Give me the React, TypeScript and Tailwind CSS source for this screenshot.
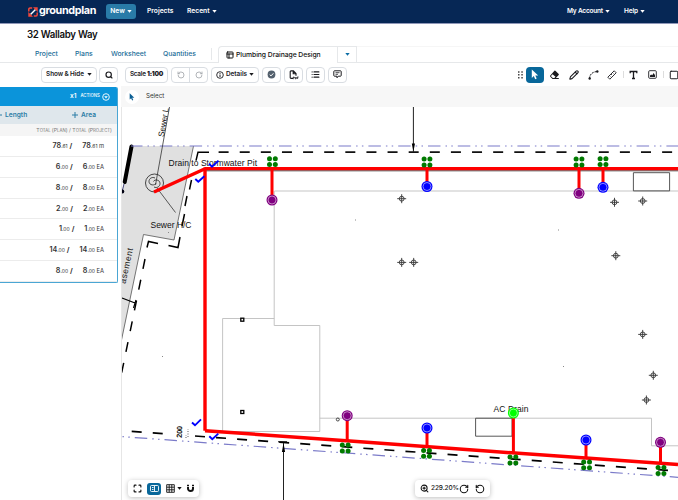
import React from "react";
import { List, Maximize, PanelsTopLeft, Pencil, RotateCcw, RotateCw, Search, Square, ZoomIn } from "lucide-react";

const rows = [
  { whole: "78", part: ".61", unit: "m" },
  { whole: "6", part: ".00", unit: "EA" },
  { whole: "8", part: ".00", unit: "EA" },
  { whole: "2", part: ".00", unit: "EA" },
  { whole: "1", part: ".00", unit: "EA" },
  { whole: "14", part: ".00", unit: "EA" },
  { whole: "8", part: ".00", unit: "EA" },
];

const clusters = [
  [272.4, 161.7],
  [427, 162],
  [579, 162],
  [603, 161.7],
  [345.2, 448],
  [426.5, 453.3],
  [512.9, 460],
  [586.6, 464.9],
  [661, 470.5],
];

const drops = [
  { x: 272, from: 169, to: 200, color: "#800080" },
  { x: 427, from: 169, to: 186.5, color: "#0000ff" },
  { x: 579, from: 169, to: 193.3, color: "#800080" },
  { x: 603, from: 169, to: 187.3, color: "#0000ff" },
  { x: 347.2, from: 441, to: 415.7, color: "#800080" },
  { x: 427, from: 446, to: 428, color: "#0000ff" },
  { x: 513.4, from: 453, to: 413, color: "#00ff00" },
  { x: 586, from: 458, to: 440, color: "#0000ff" },
  { x: 660.5, from: 463, to: 442.3, color: "#800080" },
];

const targets = [
  [401.7, 198.7],
  [401.7, 262.4],
  [413.7, 262.4],
  [614.5, 202.3],
  [642.7, 201],
  [615.8, 255.7],
  [642.7, 334.4],
  [653.3, 375.3],
  [646.4, 400],
];

const checks = ["M209 163.8l3 2.8 6.5-6", "M195.3 179l3 2.8 6-5.5", "M192 422.5l3 2.8 6-6", "M209.3 436.3l3 2.8 6-5.5"];

function Caret({ className = "" }: { className?: string }) {
  return (
    <svg className={`shrink-0 ${className}`} width="5" height="3" viewBox="0 0 5 3" fill="currentColor">
      <path d="M.3 0h4.4L2.5 2.8z" />
    </svg>
  );
}

function Button({ className = "", children }: { className?: string; children: React.ReactNode }) {
  return (
    <div className={`flex h-4 shrink-0 items-center justify-center rounded border border-[#d9dde2] bg-white text-[#1b1b1f] ${className}`}>{children}</div>
  );
}

function Header() {
  return (
    <div className="flex h-6 w-full shrink-0 items-center border-b border-[#8f97b8] bg-[#062755] text-[6.7px] font-semibold text-white">
      <svg className="ml-[27.5px] shrink-0" width="10" height="10" viewBox="0 0 10 10" fill="none">
        <path d="M4.2 1H2a1.2 1.2 0 0 0-1.2 1.200v2.300M5.800 9H8a1.200 1.200 0 0 0 1.200-1.200V5.500" stroke="#f4473a" strokeWidth="1.5" />
        <path d="M2.5 7.5l5-5" stroke="#fff" strokeWidth="1.5" />
        <path d="M5 .3h4.700V5zM.3 5v4.700H5z" fill="#f4473a" />
      </svg>
      <span className="ml-[1.5px] w-[68px] text-[10.8px] font-bold tracking-[-0.35px]">groundplan</span>
      <div className="-ml-px flex h-[15px] w-[30px] items-center justify-center gap-0.5 rounded-[3px] bg-[#297ba8]">
        New <Caret />
      </div>
      <span className="ml-[11px] w-[40px]">Projects</span>
      <span className="flex items-center gap-[2px]">
        Recent <Caret />
      </span>
      <span className="ml-auto mr-[14px] flex items-center gap-[2px] text-[6.5px] tracking-[-0.2px]">
        My Account <Caret />
      </span>
      <span className="mr-[33px] flex items-center gap-[2px] text-[6.5px] tracking-[-0.1px]">
        Help <Caret />
      </span>
    </div>
  );
}

function Tabs() {
  return (
    <div className="flex h-[18px] shrink-0 pt-px text-[6.8px] font-medium text-[#1a6c98]">
      <div className="flex w-[218px] shrink-0 items-center border-b border-[#e6e8ea] pl-[35px]">
        <span className="w-[40px]">Project</span>
        <span className="w-[36px]">Plans</span>
        <span className="w-[52px]">Worksheet</span>
        <span className="w-[48px]">Quantities</span>
        <span className="h-3 border-l border-[#e6e8ea]" />
      </div>
      <div className="flex w-[119px] shrink-0 items-center rounded-tl border-l border-t border-[#e6e8ea] pl-[7px] text-[#111]">
        <PanelsTopLeft className="mr-[2px] size-[8px]" strokeWidth={3} />
        <span className="whitespace-nowrap tracking-[-0.05px]">Plumbing Drainage Design</span>
      </div>
      <div className="flex w-[20px] shrink-0 items-center justify-center border border-[#e6e8ea] text-[#0b6da5]">
        <Caret />
      </div>
      <div className="grow border-y border-b-[#e6e8ea] border-t-[#f6f6f6]" />
    </div>
  );
}

function Toolbar() {
  return (
    <div className="flex h-[23px] shrink-0 items-center overflow-hidden pl-[41px] text-[6.4px] font-semibold">
      <Button className="w-[56px] gap-[3px]">
        <span className="tracking-[-0.1px]">Show &amp; Hide</span> <Caret />
      </Button>
      <Button className="ml-[2px] w-[19px]">
        <Search className="size-[8px]" strokeWidth={3.5} />
      </Button>
      <Button className="ml-[7px] w-[43px] whitespace-nowrap tracking-[-0.25px]">
        Scale&nbsp;<b>1:100</b>
      </Button>
      <Button className="ml-[3px] w-[37px] text-[#a2a6ab]">
        <span className="flex flex-1 justify-center">
          <RotateCcw className="size-[8px]" strokeWidth={2.5} />
        </span>
        <span className="h-full border-l border-[#d9dde2]" />
        <span className="flex flex-1 justify-center">
          <RotateCw className="size-[8px]" strokeWidth={2.5} />
        </span>
      </Button>
      <Button className="ml-[3px] w-[48px] gap-[2px]">
        <svg width="8" height="8" viewBox="0 0 8 8" fill="none" stroke="currentColor">
          <circle cx="4" cy="4" r="3.3" strokeWidth=".9" />
          <path d="M4 3.5V6M4 2v.9" strokeWidth="1" />
        </svg>
        Details <Caret />
      </Button>
      <Button className="ml-[3px] w-[19px]">
        <svg width="9" height="9" viewBox="0 0 9 9">
          <circle cx="4.5" cy="4.5" r="3.9" fill="#53606d" />
          <path d="M2.7 4.6l1.3 1.3 2.4-2.6" fill="none" stroke="#fff" strokeWidth="1" />
        </svg>
      </Button>
      <Button className="ml-[3px] w-[19px]">
        <svg width="10" height="10" viewBox="0 0 10 10" fill="none" stroke="currentColor" strokeWidth="1.1">
          <path d="M4 8.4H2a.8.8 0 0 1-.8-.8V1.7A.8.8 0 0 1 2 .9h2.4L7 3.5v2.3M4.2 1v2.7H7" />
          <path d="M4.3 9.2V7h.9v1M6.2 7v1.8h.9V7M8.2 9V7h1.4M8.2 8h1" strokeWidth=".8" />
        </svg>
      </Button>
      <Button className="ml-[3px] w-[19px]">
        <List className="size-[9px]" strokeWidth={3} />
      </Button>
      <Button className="ml-[3px] w-[19px]">
        <svg width="9" height="9" viewBox="0 0 9 9" fill="none" stroke="currentColor">
          <path d="M1.5.8h6a.7.7 0 0 1 .7.7v4a.7.7 0 0 1-.7.7H5.300L4 7.800V6.200H1.500a.7.7 0 0 1-.7-.7v-4a.7.7 0 0 1 .7-.7z" />
          <path d="M2.5 2.7h4M2.5 4.3h2.5" strokeWidth=".8" />
        </svg>
      </Button>
      <div className="ml-auto flex w-[160px] shrink-0 items-center text-[#1b1b1f]">
        <svg className="shrink-0" width="5" height="8" viewBox="0 0 5 8" fill="#444">
          {[0.3, 3.1, 5.9].map((y) => (
            <path key={y} d={`M0 ${y}h1.5v1.5h-1.5zM3.3 ${y}h1.5v1.5h-1.5z`} />
          ))}
        </svg>
        <div className="ml-[3px] flex h-4 w-[18px] shrink-0 items-center justify-center rounded bg-[#08679a] text-white">
          <svg width="8" height="11" viewBox="0 0 8 11" fill="currentColor">
            <path d="M.8.5v8.4l2-1.8 1.4 3.2 1.5-.7-1.4-3h2.9z" />
          </svg>
        </div>
        <svg className="ml-[5px] shrink-0" width="11" height="10" viewBox="0 0 10 10">
          <path d="M4.9.8a.8.8 0 0 1 1 0l3.3 3.3a.8.8 0 0 1 0 1L6.3 8h3v1H3L.8 6.7a.8.8 0 0 1 0-1.1z" fill="currentColor" />
          <path d="M3.1 4.3L1.7 5.7a.5.5 0 0 0 0 .7L3.3 8h1.5l1.2-1.2z" fill="#fff" />
        </svg>
        <Pencil className="ml-[9px] size-[10px] shrink-0" strokeWidth={2.6} />
        <svg className="ml-[9px] shrink-0" width="11" height="10" viewBox="0 0 11 10">
          <path d="M1.5 8.5C1.8 4 4.5 2 9 1.5" fill="none" stroke="currentColor" strokeWidth="1" strokeDasharray="2 1" />
          <circle cx="1.7" cy="8.5" r="1.2" fill="currentColor" />
          <circle cx="9.3" cy="1.5" r="1.2" fill="currentColor" />
        </svg>
        <svg className="ml-[8px] shrink-0" width="10" height="10" viewBox="0 0 10 10" fill="none" stroke="currentColor">
          <path d="M.8 7.2L7.2.8l2 2L2.8 9.2zM5.5 2.5l.9.9M4 4l.9.9M2.5 5.5l.9.9" strokeWidth=".9" />
        </svg>
        <span className="ml-[6px] h-[7px] border-l border-[#dddddd]" />
        <svg className="ml-[5px] shrink-0" width="9" height="10" viewBox="0 0 9 10" fill="none" stroke="currentColor" strokeWidth="1.3">
          <path d="M1.2 3.2V1.5h6.6v1.7M4.5 1.5v7M3 8.5h3" />
        </svg>
        <svg className="ml-[10px] shrink-0" width="9" height="9" viewBox="0 0 9 9">
          <rect x=".7" y=".7" width="7.6" height="7.6" rx="1" fill="none" stroke="currentColor" strokeWidth=".9" />
          <path d="M2 7V5.5l1.2-1 1 .7L5.7 3 7 5.2V7z" fill="currentColor" />
        </svg>
        <span className="ml-[6px] h-[7px] border-l border-[#dddddd]" />
        <Square className="ml-[5px] size-[10px] shrink-0" strokeWidth={2.4} />
      </div>
    </div>
  );
}

function Amount({ row, className = "" }: { row: (typeof rows)[0]; className?: string }) {
  return (
    <span className={className}>
      <b className="text-[7.2px] font-semibold">{row.whole}</b>
      {row.part}
    </span>
  );
}

function Takeoffs() {
  return (
    <div className="mt-px flex h-[196px] w-[118px] shrink-0 flex-col overflow-hidden rounded-r-[2px] border-b border-r border-[#4aa6d4] bg-white">
      <div className="flex h-[19px] shrink-0 items-center bg-[#0b94da] pl-[70px] text-[6.5px] font-semibold text-white">
        x1
        <span className="ml-[4px] text-[4.3px] font-medium">ACTIONS</span>
        <svg className="ml-[2px] shrink-0" width="8" height="8" viewBox="0 0 8 8" fill="none" stroke="currentColor">
          <circle cx="4" cy="4" r="3.3" strokeWidth=".9" />
          <path d="M2.2 3.2h3.6L4 5.6z" fill="currentColor" stroke="none" />
        </svg>
      </div>
      <div className="flex h-[18px] shrink-0 items-center bg-[#dfe7ec] text-[6.6px] font-semibold text-[#2b7da6]">
        <svg className="-ml-[4px]" width="6" height="6" viewBox="0 0 6 6" stroke="currentColor">
          <path d="M0 3h6M3 0v6" />
        </svg>
        <span className="ml-[3px] w-[67px]">Length</span>
        <svg width="6" height="6" viewBox="0 0 6 6" stroke="currentColor">
          <path d="M0 3h6M3 0v6" />
        </svg>
        <span className="ml-[3px]">Area</span>
      </div>
      <div className="flex h-[12px] shrink-0 items-baseline justify-end whitespace-nowrap bg-[#f5f5f5] pr-[5px] pt-[4px] text-[4.3px] text-[#777]">
        <span className="text-[5.2px]">T</span>OTAL&nbsp;<span className="text-[5.2px]">(P</span>LAN<span className="text-[5.2px]">)&nbsp;/&nbsp;T</span>OTAL&nbsp;<span className="text-[5.2px]">(P</span>ROJECT<span className="text-[5.2px]">)</span>
      </div>
      {rows.map((row, i) => (
        <div key={i} className="flex flex-1 items-baseline justify-end border-b border-[#ececec] pr-[13px] pt-[6px] text-[5px] text-[#333]">
          <Amount row={row} />
          <b className="ml-[2px] text-[7px]">/</b>
          <Amount row={row} className="ml-[10px]" />
          <span className="ml-[1.5px] text-[5.8px]">{row.unit}</span>
        </div>
      ))}
    </div>
  );
}

function Drawing() {
  return (
    <svg className="block h-[393px] w-[557px] bg-white" viewBox="121 107 557 393" fontFamily="Liberation Sans, Arial, sans-serif" fontSize="8.5" fill="#111">
      {/* easement */}
      <path d="M121 146H193.500L174 240l-30.500-5.500L121 344z" fill="#e0e0e0" />
      <path d="M193.500 146L174 240l-30.500-5.500L121.500 340" fill="none" stroke="#555" strokeWidth=".8" />
      <path d="M121 107h10.500v39L124 183l-3 10z" fill="#fff" />
      <path d="M131.500 146.500L124.700 182" stroke="#000" strokeWidth="4" strokeLinecap="round" />
      <path d="M124 184l-2 8" stroke="#1c1c60" strokeWidth=".8" />
      <circle cx="122.300" cy="191.500" r="2" fill="#001" />
      {/* boundaries */}
      <g fill="none">
        <path d="M131 146H678" stroke="#7b7bc9" strokeWidth="1.200" strokeDasharray="12.500 5 1.500 4.300 1.500 5" strokeDashoffset="1" />
        <path d="M122 436.600L678 477.300" stroke="#7b7bc9" strokeWidth="1.200" strokeDasharray="12.500 5 1.500 4.300 1.500 5" strokeDashoffset="17" />
        <path d="M218.600 152.200H678" stroke="#111" strokeWidth="1.800" strokeDasharray="10 11.120" />
        <path d="M131.700 431.400l31.800 2.300" stroke="#000" strokeWidth="1.700" strokeDasharray="10 11.100" />
        <path d="M195 436L678 471.100" stroke="#000" strokeWidth="1.700" strokeDasharray="10 11.100" />
        <path d="M209 152.200h-11l-2 8.500M191.500 180l-2 9.500M187 196l-2 10M184.500 214l-2.500 12M180 237l-2 10.500-9.500-2M158 243.500l-9.500-2-1.500 6" stroke="#000" strokeWidth="1.500" />
        <path d="M145 259L121 376" stroke="#000" strokeWidth="1.500" strokeDasharray="10 11.200" />
        <path d="M122 298l13 5M136 300l-2.500 8" stroke="#000" strokeWidth="1.200" />
        <path d="M169.500 107L155.500 185M157 188l18.500 24.500" stroke="#333" strokeWidth=".8" />
        <circle cx="154.500" cy="183" r="9" stroke="#333" strokeWidth=".9" />
        <path d="M155 178c-3-1.500-6 .5-6 3.500 0 4 6 4.500 7 1.500M153.500 181.500c1-2.500 6.500-2 6.500 2 0 3-3 5-6 3.500" stroke="#333" strokeWidth=".9" />
      </g>
      {/* building */}
      <g fill="none" stroke="#bdbdbd" strokeWidth=".9">
        <path d="M274.500 191H678" stroke="#d8d8d8" strokeWidth="1.500" />
        <path d="M274.200 191V325.500H319.800V431.500H222.600V318.500H274.200" />
        <path d="M319.800 418.200H651.500V445.800H678" />
        <circle cx="337.800" cy="419.500" r="1.500" stroke="#333" />
        <path d="M633.400 172.700h36.200v18.200h-36.200zM475.600 418.200h36.400v18h-36.400z" stroke="#444" />
      </g>
      <path d="M205 170.800H678" stroke="#444" strokeWidth="1" />
      <path d="M413.400 107V152M283.500 443V500" stroke="#222" strokeWidth="1" />
      <path d="M411.800 143.500h3.200l-1.600 8zM281.900 452h3.200l-1.600-9z" fill="#000" />
      <path d="M278 441.800h9" stroke="#000" />
      {[319.7, 412].map((y) => (
        <rect key={y} x="240.800" y={y - 1.5} width="3" height="3" fill="#fff" stroke="#000" strokeWidth="1.300" />
      ))}
      <path d="M355 219.500h1v1h-1zM558 229.500h1v1h-1zM162 356h1v1h-1zM563 366h1v1h-1zM168 232h1v1h-1z" fill="#888" />
      {targets.map(([x, y]) => (
        <g key={`${x}-${y}`} fill="none" stroke="#333" strokeWidth=".9">
          <circle cx={x} cy={y} r="2.400" />
          <path d={`M${x - 4.5} ${y}h9M${x} ${y - 4.5}v9`} />
        </g>
      ))}
      <text x="168.500" y="166" textLength="88.500">Drain to Stormwater Pit</text>
      <text x="150.500" y="228" textLength="41">Sewer H/C</text>
      <text x="493.500" y="412.300" textLength="35">AC Drain</text>
      {/* pipes */}
      <path d="M154 192L205 168.700M205 430.700L350 441l140 10.300L678 464.500" fill="none" stroke="#f00" strokeWidth="3.400" />
      <path d="M678 168.600H205V430.700" fill="none" stroke="#f00" strokeWidth="3.400" strokeLinejoin="round" />
      {drops.map((d) => (
        <path key={d.x + d.from} d={`M${d.x} ${d.from}V${d.to}`} stroke="#f00" strokeWidth="3" />
      ))}
      <text transform="translate(163.800 137.300) rotate(-80)" fontSize="8.300" textLength="29.500">
        Sewer L
      </text>
      <text transform="translate(125.500 284) rotate(-78)" textLength="36">
        asement
      </text>
      <text transform="translate(181.800 438) rotate(-88)" fontSize="7.500" fontWeight="bold" textLength="12">
        200
      </text>
      <path d="M186 438v-3M188 437v-8" stroke="#777" strokeWidth="1.200" strokeDasharray="1 1.500" />
      {checks.map((d) => (
        <path key={d} d={d} fill="none" stroke="#0000ff" strokeWidth="1.900" />
      ))}
      {clusters.map(([x, y]) => (
        <g key={x} fill="#007a00">
          <circle cx={x - 2.9} cy={y - 2.9} r="2.500" />
          <circle cx={x + 2.9} cy={y - 2.9} r="2.500" />
          <circle cx={x - 2.9} cy={y + 2.9} r="2.500" />
          <circle cx={x + 2.9} cy={y + 2.9} r="2.500" />
        </g>
      ))}
      {drops.map((d) => (
        <g key={d.x + d.to} fill={d.color}>
          <circle cx={d.x} cy={d.to} r="5.500" />
          <circle cx={d.x} cy={d.to} r="4" fill="none" stroke="#fff" strokeOpacity=".75" strokeWidth=".7" />
        </g>
      ))}
      <path d="M121.500 107V500" stroke="#e6e6e6" />
    </svg>
  );
}

export default function App() {
  return (
    <div className="flex h-[500px] w-[678px] flex-col overflow-hidden bg-white font-[Inter,sans-serif] leading-none text-[#111]">
      <Header />
      <div className="h-[21px] shrink-0 pl-[27px] pt-[6px] text-[9.7px] font-semibold tracking-[-0.3px]">32 Wallaby Way</div>
      <Tabs />
      <Toolbar />
      <div className="flex min-h-0 grow">
        <Takeoffs />
        <div className="ml-[3px] flex w-[557px] shrink-0 flex-col">
          <div className="flex h-[21px] shrink-0 items-center bg-[#f7f7f7] pl-[4px] text-[6.200px] text-[#333]">
            <div className="flex size-[14px] items-center justify-center rounded-full bg-white">
              <svg width="6" height="8" viewBox="0 0 8 11" fill="#0b5f94">
                <path d="M.8.5v8.4l2-1.8 1.4 3.2 1.5-.7-1.4-3h2.9z" />
              </svg>
            </div>
            <span className="ml-[7px]">Select</span>
          </div>
          <div className="relative">
            <Drawing />
            <div className="absolute bottom-[3px] left-[7px] flex h-[17px] w-[71px] items-center rounded bg-white pl-[5px] shadow-[0_1px_5px_rgba(0,0,0,0.25)]">
              <Maximize className="size-[9px]" strokeWidth={3} />
              <div className="ml-[5px] flex h-[12px] w-[14px] items-center justify-center rounded-[3px] bg-[#08679a]">
                <svg width="9" height="7" viewBox="0 0 9 7" fill="none" stroke="#fff">
                  <rect x=".5" y=".5" width="8" height="6" rx="1" strokeWidth=".9" />
                  <path d="M4.5 1v5M2 2.5h1.5M2 4.5h1.5" strokeWidth=".9" />
                </svg>
              </div>
              <svg className="ml-[5px]" width="9" height="9" viewBox="0 0 9 9" fill="none" stroke="#111" strokeWidth=".9">
                <path d="M.7.7h7.6v7.6H.7zM3.2.7v7.6M5.8.7v7.6M.7 3.2h7.6M.7 5.8h7.6" />
              </svg>
              <Caret className="ml-[2px]" />
              <svg className="ml-[4px]" width="9" height="9" viewBox="0 0 9 9" fill="none" stroke="#111" strokeWidth="2">
                <path d="M2 2.8v1.7a2.500 2.500 0 0 0 5 0V2.800M2 .7v1.300M7 .7v1.300" />
              </svg>
            </div>
            <div className="absolute bottom-[3px] left-[294px] flex h-[17px] w-[75px] items-center rounded bg-white pl-[5px] text-[6.5px] font-medium shadow-[0_1px_5px_rgba(0,0,0,0.25)]">
              <ZoomIn className="size-[9px] shrink-0" strokeWidth={2.7} />
              <span className="ml-[2px] w-[28px] tracking-[-0.1px]">229.20%</span>
              <RotateCw className="size-[10px] shrink-0" strokeWidth={2.5} />
              <RotateCcw className="ml-[6px] size-[10px] shrink-0" strokeWidth={2.5} />
            </div>
          </div>
        </div>
      </div>
    </div>
  );
}
